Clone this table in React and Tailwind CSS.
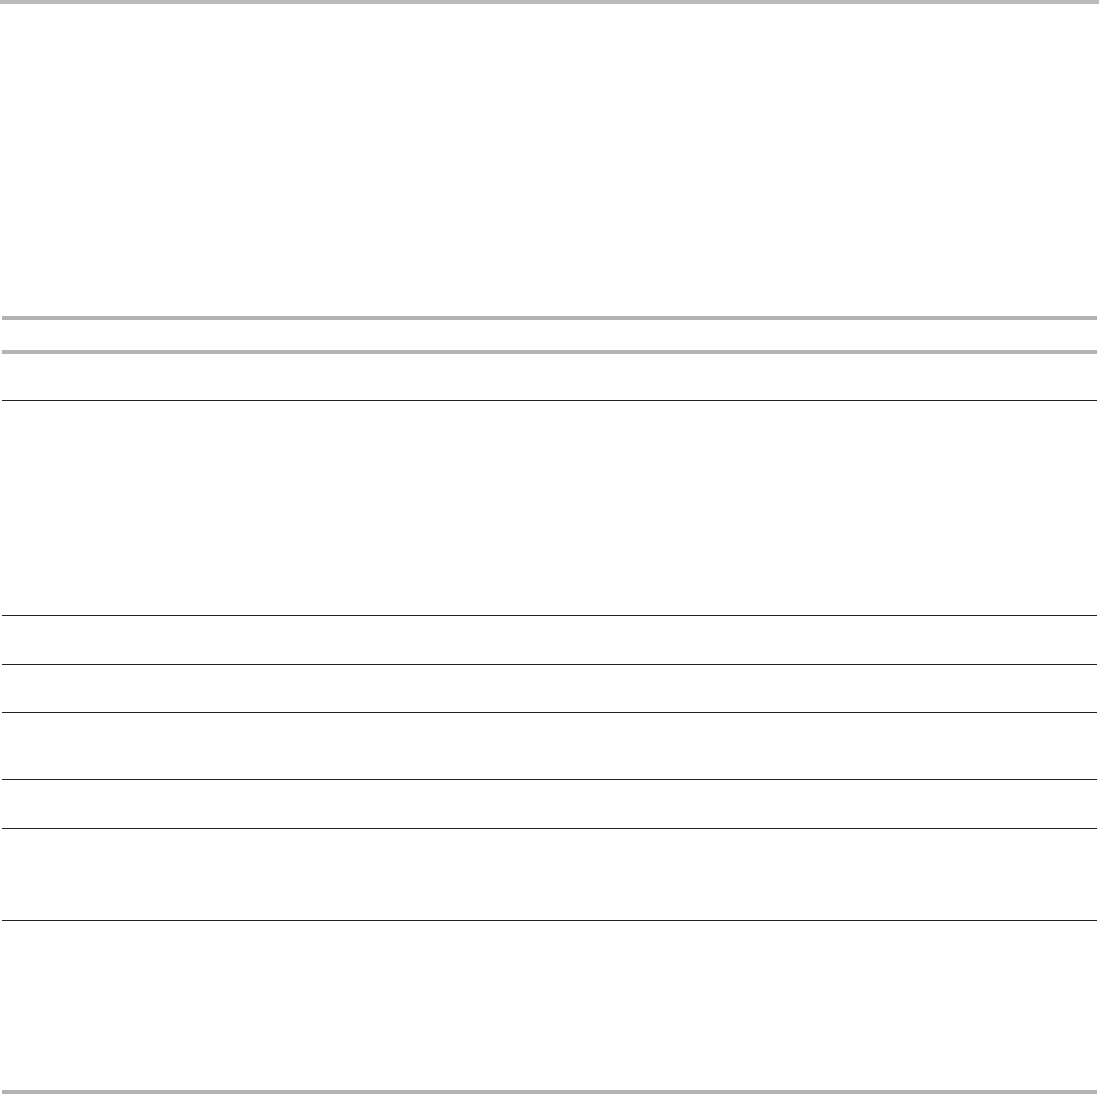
export default function App() {
    const rows = [47, 215, 49, 48, 67, 49, 92];
    return (
        <div className="w-[1099px] h-[1094px] bg-white">
            {/* top rule */}
            <div className="h-[4px] bg-[#bbbbbb]" />

            <div className="mx-[2px] flex flex-col">
                {/* header area */}
                <div className="h-[312px]" />
                <div className="h-[4px] bg-[#b3b3b3]" />
                <div className="h-[30px]" />
                <div className="h-[4px] bg-[#b3b3b3]" />

                {/* body rows */}
                {rows.map((h, i) => (
                    <div
                        key={i}
                        className="border-b border-[#222222]"
                        style={{ height: h }}
                    />
                ))}

                <div className="h-[169px]" />
                <div className="h-[4px] bg-[#b3b3b3]" />
            </div>
        </div>
    );
}
